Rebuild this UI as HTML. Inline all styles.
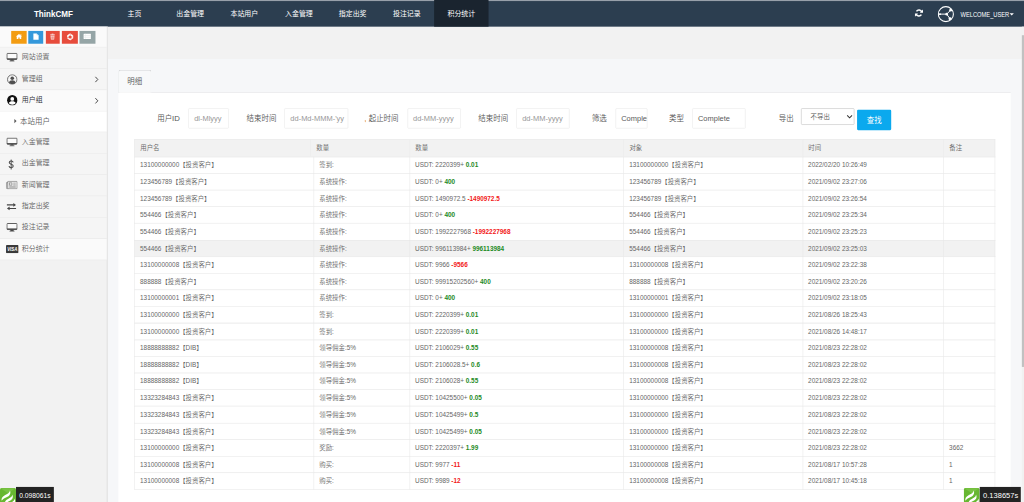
<!DOCTYPE html>
<html lang="zh-CN"><head><meta charset="utf-8"><title>ThinkCMF</title>
<style>
html,body{margin:0;padding:0;width:1024px;height:502px;overflow:hidden;background:#f6f7f9;}
body{font-family:"Liberation Sans","Noto Sans CJK SC",sans-serif;position:relative;}
#stage{position:absolute;left:0;top:0;width:1920px;height:960px;overflow:hidden;transform:scale(0.5333333);transform-origin:0 0;background:#f6f7f9;color:#666;font-size:12px;font-weight:350;}
#stage div,#stage a,#stage span,#stage label,#stage i,#stage b{box-sizing:border-box;}
.band{position:absolute;left:201px;top:50px;width:1719px;height:61px;background:#f2f2f2;}
.ifr{position:absolute;left:201px;top:111px;width:1719px;height:831px;background:#f6f7f9;}
/* header */
.hdr{position:absolute;left:0;top:0;width:1920px;height:50px;background:#2c3e50;}
.topline{position:absolute;left:0;top:0;width:1920px;height:1.9px;background:#98a0aa;}
.brand{position:absolute;left:0;top:0;width:200px;height:50px;line-height:51px;text-align:center;color:#fff;font-size:17px;font-weight:bold;}
.brand span{display:inline-block;transform:scaleX(0.89);}
.nv{position:absolute;top:0;height:50px;line-height:52px;color:#fff;font-size:13px;white-space:nowrap;font-weight:400;}
.navact{position:absolute;top:0;width:101.6px;height:50px;background:#1a242f;}
.wu{position:absolute;left:1800.7px;top:0;height:50px;line-height:56px;color:#fff;font-size:12px;white-space:nowrap;font-weight:400;}
.wu span{display:inline-block;transform:scaleX(0.895);transform-origin:0 50%;}
.caret{position:absolute;left:1893.3px;top:24.6px;width:0;height:0;border-left:4.2px solid transparent;border-right:4.2px solid transparent;border-top:4.6px solid #fff;}
.hic{position:absolute;}
/* sidebar */
.side{position:absolute;left:0;top:50px;width:200px;height:892px;background:#f2f2f2;border-right:2px solid #e1e1e1;box-sizing:content-box !important;}
.shortcuts{position:absolute;left:0;top:0;width:200px;height:39px;background:#fafafa;border-bottom:1px solid #e2e2e2;}
.sbtn{position:absolute;top:7.5px;width:29px;height:24px;}
.sbtn svg{position:absolute;left:50%;margin-left:-14.5px;top:-0.8px;}
.mi{position:absolute;left:0;width:200px;background:#f5f5f5;border-bottom:1px solid #e4e4e4;color:#626262;font-size:13px;}
.mi.open{background:#fafafa;color:#2b2d33;}
.mi.sub{background:#fff;color:#616161;}
.mi.hov{background:#fafafa;}
.mi .ic{position:absolute;left:0;top:0;width:44px;height:39px;}
.mi .ic svg{position:absolute;}
.mi .mt{position:absolute;left:40.8px;top:0;line-height:36px;white-space:nowrap;}
.mi.sub .mt{line-height:36.5px;font-size:14px;}
.subcaret{position:absolute;left:26.6px;top:14.4px;width:0;height:0;border-top:4px solid transparent;border-bottom:4px solid transparent;border-left:4.6px solid #555;}
/* tab & panel */
.tabline{position:absolute;left:222px;top:172.5px;width:1673px;height:1px;background:#dddee1;}
.tab{position:absolute;left:221.6px;top:131px;width:62px;height:42.5px;border:1.3px solid #d3d4d7;border-bottom:none;border-radius:4px 4px 0 0;background:#f8f9fa;color:#555;font-size:14px;line-height:40px;text-align:center;}
.panel{position:absolute;left:222px;top:173.5px;width:1673px;height:780px;background:#fff;}
/* form */
.fl{position:absolute;top:203px;height:38px;line-height:38px;font-size:14px;color:#555;white-space:nowrap;}
.fi{position:absolute;top:203px;height:38px;border:1px solid #e6e6e6;border-radius:2px;background:#fff;overflow:hidden;font-size:14px;color:#979797;line-height:37px;white-space:nowrap;}
.fi span{position:absolute;left:10px;top:0;}
.fi.val{color:#5a5a5a;}
.omark{position:absolute;left:684.2px;top:225px;width:2px;height:4.4px;background:#eab27a;border-radius:1px;}
.sel{position:absolute;left:1502.3px;top:203px;width:100px;height:31px;border:1px solid #bdbdbd;border-radius:2px;background:#fff;font-size:12px;color:#555;line-height:32px;}
.sel span{position:absolute;left:16.6px;top:0;}
.sel svg{position:absolute;left:83.4px;top:9.6px;}
.btn{position:absolute;left:1607.3px;top:206.3px;width:64px;height:38px;background:#0ba9ee;border-radius:2px;color:#fff;font-size:14px;line-height:41.5px;text-align:center;font-weight:400;}
/* table */
.thead{position:absolute;background:#f2f2f2;border:1px solid #e6e6e6;border-right:none;}
.th{position:absolute;top:-1px;bottom:-1px;border-right:1px solid #ebebeb;padding-left:10px;line-height:34px;white-space:nowrap;color:#666;}
.th:last-child{border-right:1px solid #e6e6e6;}
.tr{position:absolute;background:#fff;border:1px solid #e6e6e6;border-right:none;}
.tr.hv{background:#f2f2f2;}
.td{position:absolute;top:-1px;bottom:-1px;border-right:1px solid #e6e6e6;padding-left:9.6px;line-height:33.4px;white-space:nowrap;color:#666;}
.td .sp{display:inline-block;width:0.4px;}
.td b.g{color:#1d8a25;font-weight:bold;}
.td b.r{color:#f21818;font-weight:bold;}
/* scrollbar */
.sbtrack{position:absolute;left:1915.6px;top:50px;width:5px;height:892px;background:#f1f1f1;}
.sbthumb{position:absolute;left:1916.3px;top:66.2px;width:4px;height:621.4px;background:#c1c1c1;}
/* trace */
.trace{position:absolute;height:40px;white-space:nowrap;}
.trace svg{position:absolute;left:0;top:1.7px;}
.trace .tt{position:absolute;left:30px;top:0;height:40px;width:71.3px;background:#232323;color:#fff;font-size:12.6px;line-height:33px;padding-left:6px;font-weight:400;}

</style></head><body>
<div id="stage">
<div class="band"></div>
<div class="ifr"></div>
<div class="hdr"><div class="topline"></div>
<div class="brand"><span>ThinkCMF</span></div>
<a class="nv" style="left:239.0px">主页</a>
<a class="nv" style="left:330.5px">出金管理</a>
<a class="nv" style="left:432.2px">本站用户</a>
<a class="nv" style="left:534.4px">入金管理</a>
<a class="nv" style="left:635.2px">指定出奖</a>
<a class="nv" style="left:736.9px">投注记录</a>
<div class="navact" style="left:814.0px"></div><a class="nv" style="left:839.0px">积分统计</a>
<svg class="hic" style="left:1714.5px;top:17.4px" width="16" height="15" viewBox="0 0 16 15"><g fill="none" stroke="#fff" stroke-width="2.800"><path d="M13.300 5.600A5.500 5.500 0 0 0 3.400 4.400"/><path d="M2.700 9.400A5.500 5.500 0 0 0 12.600 10.600"/></g><path d="M15.600 0.800v6H9.600z" fill="#fff"/><path d="M0.400 14.200V8.200h6z" fill="#fff"/></svg><svg class="hic" style="left:1758px;top:11.200px" width="31" height="31" viewBox="0 0 31 31"><circle cx="15.500" cy="15.500" r="14.100" fill="none" stroke="#fff" stroke-width="2"/><g stroke="#fff" stroke-width="1.800" fill="none"><path d="M2 15.500H17L25.500 7"/><path d="M17 15.500L24 25"/></g><circle cx="17" cy="15.500" r="2.400" fill="#fff"/><circle cx="24.500" cy="8" r="2.600" fill="#fff"/><circle cx="23.300" cy="24" r="2.800" fill="#fff"/><circle cx="4.600" cy="15.500" r="1.800" fill="#fff"/></svg><div class="wu"><span>WELCOME_USER</span></div><div class="caret"></div>
</div>
<div class="side">
<div class="shortcuts"><div class="sbtn" style="left:21.0px;width:29.2px;background:#f39c12"><svg width="29" height="24" viewBox="0 0 29 24"><path d="M14.600 6.600L8.800 11.600h1.600v4.700h3v-3.100h2.400v3.100h3v-4.700h1.600z" fill="#fff"/><rect x="17.400" y="7.300" width="1.500" height="2.800" fill="#fff"/></svg></div><div class="sbtn" style="left:53.0px;width:28.3px;background:#3498db"><svg width="29" height="24" viewBox="0 0 29 24"><path d="M9.600 5.600h6.200l3.600 3.600v8.400H9.600z" fill="#fff"/><path d="M15.800 5.600v3.600h3.600z" fill="#a6d0ef"/></svg></div><div class="sbtn" style="left:85.6px;width:26.8px;background:#e74c3c"><svg width="29" height="24" viewBox="0 0 29 24"><g opacity="0.92"><rect x="10.200" y="7.600" width="8.600" height="1.500" fill="#fff"/><rect x="12.800" y="6.200" width="3.400" height="1.500" fill="#fff"/><path d="M10.900 10h7.200l-.6 7.200h-6z" fill="#fff"/><g stroke="#e74c3c" stroke-width="0.900"><path d="M12.900 11.200v4.800M14.500 11.200v4.800M16.100 11.200v4.800"/></g></g></svg></div><div class="sbtn" style="left:116.2px;width:29.7px;background:#e74c3c"><svg width="29" height="24" viewBox="0 0 29 24"><path d="M14.500 6.400l4.900 3v5.400l-4.900 3-4.900-3V9.400z" fill="#fff" stroke="#fff" stroke-width="1.400" stroke-linejoin="round"/><path d="M14.500 9.200l2.800 1.600v3.200l-2.800 1.600-2.800-1.600v-3.200z" fill="#e74c3c"/><g stroke="#e74c3c" stroke-width="0.900"><path d="M16.800 5l-1.300 3.400M8.600 13.600l3.400-.4M19.600 17.200l-2.400-2.400"/></g></svg></div><div class="sbtn" style="left:148.7px;width:30.2px;background:#95a5a6"><svg width="29" height="24" viewBox="0 0 29 24"><rect x="7.800" y="6.200" width="13.600" height="10" rx="0.600" fill="#fff"/><g stroke="#d9dede" stroke-width="0.8"><path d="M7.800 9.600h13.600M7.800 12.900h13.600"/></g><path d="M11.200 6.200v10" stroke="#e2e6e6" stroke-width="0.700"/></svg></div></div>
<div class="mi" style="top:39.0px;height:40.0px"><span class="ic"><svg style="left:11.5px;top:10.4px" width="21" height="17" viewBox="0 0 21 17"><rect x="1" y="1" width="19" height="11.400" rx="1.400" fill="#fbfbfb" stroke="#4a4a4a" stroke-width="1.700"/><rect x="1" y="10.300" width="19" height="2.100" fill="#4a4a4a"/><path d="M8 12.300h5l.8 2.600H7.200z" fill="#4a4a4a"/><rect x="5.800" y="14.600" width="9.400" height="1.600" rx="0.600" fill="#4a4a4a"/></svg></span><span class="mt">网站设置</span></div>
<div class="mi" style="top:79.0px;height:40.0px"><span class="ic"><svg style="left:12.6px;top:10.2px" width="20" height="20" viewBox="0 0 20 20"><circle cx="10" cy="10" r="8.9" fill="none" stroke="#4f4f4f" stroke-width="1.5"/><circle cx="10" cy="7.7" r="3.3" fill="#4f4f4f"/><path d="M3.8 15.6c.8-3 3-4.2 6.2-4.2s5.4 1.200 6.200 4.200c-1.600 1.900-3.800 2.900-6.200 2.900s-4.600-1-6.200-2.900z" fill="#4f4f4f"/></svg></span><span class="mt">管理组</span><svg style="position:absolute;left:176.600px;top:13.400px" width="9" height="14" viewBox="0 0 9 14"><path d="M1.800 2L6.400 7l-4.600 5" fill="none" stroke="#444" stroke-width="1.800"/></svg></div>
<div class="mi open" style="top:119.0px;height:40.0px"><span class="ic"><svg style="left:12.6px;top:9.2px" width="20" height="20" viewBox="0 0 20 20"><circle cx="10" cy="10" r="9.7" fill="#111"/><circle cx="10" cy="7.5" r="3.5" fill="#fff"/><path d="M3.5 15.2c1-2.500 3.200-3.500 6.500-3.500s5.500 1 6.500 3.500c-1.500 2-3.900 3.100-6.500 3.100s-5-1.100-6.500-3.100z" fill="#fff"/></svg></span><span class="mt">用户组</span><svg style="position:absolute;left:176.600px;top:13.400px" width="9" height="14" viewBox="0 0 9 14"><path d="M1.800 2L6.400 7l-4.600 5" fill="none" stroke="#444" stroke-width="1.800"/></svg></div>
<div class="mi sub" style="top:159.0px;height:38.8px"><i class="subcaret"></i><span class="mt" style="left:37.6px">本站用户</span></div>
<div class="mi" style="top:197.8px;height:40.0px"><span class="ic"><svg style="left:11.5px;top:10.4px" width="21" height="17" viewBox="0 0 21 17"><rect x="1" y="1" width="19" height="11.400" rx="1.400" fill="#fbfbfb" stroke="#4a4a4a" stroke-width="1.700"/><rect x="1" y="10.300" width="19" height="2.100" fill="#4a4a4a"/><path d="M8 12.300h5l.8 2.600H7.200z" fill="#4a4a4a"/><rect x="5.800" y="14.600" width="9.400" height="1.600" rx="0.600" fill="#4a4a4a"/></svg></span><span class="mt">入金管理</span></div>
<div class="mi" style="top:237.8px;height:40.0px"><span class="ic"><svg style="left:14.8px;top:10.2px" width="12" height="21" viewBox="0 0 12 21"><path d="M9.8 6.400C9.400 4.700 8 3.900 6 3.900 3.800 3.900 2.400 5 2.400 6.700c0 4.200 7.400 2.400 7.400 6.700 0 1.800-1.500 3-3.800 3-2.300 0-3.800-1-4.200-2.900" fill="none" stroke="#4a4a4a" stroke-width="2"/><path d="M6 1.200v18.600" stroke="#4a4a4a" stroke-width="1.7"/></svg></span><span class="mt">出金管理</span></div>
<div class="mi" style="top:277.8px;height:40.0px"><span class="ic"><svg style="left:11px;top:11.6px" width="22" height="16" viewBox="0 0 22 16"><rect x="3.400" y="0.900" width="17.700" height="14.200" rx="1.200" fill="#efefef" stroke="#6e6e6e" stroke-width="1.300"/><path d="M3.400 3.400H1v9.800c0 1 .8 1.900 1.800 1.900h1.600" fill="none" stroke="#6e6e6e" stroke-width="1.200"/><rect x="6.400" y="3.900" width="5" height="4.200" fill="none" stroke="#6e6e6e" stroke-width="1.100"/><g stroke="#888" stroke-width="1"><path d="M13.800 4.200h4.800M13.800 6.300h4.800M13.800 8.400h4.800M6.200 10.600h12.400M6.200 12.700h12.400"/></g></svg></span><span class="mt">新闻管理</span></div>
<div class="mi" style="top:317.8px;height:40.0px"><span class="ic"><svg style="left:12.4px;top:12.600px" width="19" height="15" viewBox="0 0 19 15"><path d="M0.800 4.200h13.200" stroke="#444" stroke-width="2"/><path d="M13 0.600l5 3.600-5 3.600z" fill="#444"/><path d="M18.200 10.800H5" stroke="#444" stroke-width="2"/><path d="M6 7.200l-5 3.600 5 3.600z" fill="#444"/></svg></span><span class="mt">指定出奖</span></div>
<div class="mi" style="top:357.8px;height:40.0px"><span class="ic"><svg style="left:11.5px;top:10.4px" width="21" height="17" viewBox="0 0 21 17"><rect x="1" y="1" width="19" height="11.400" rx="1.400" fill="#fbfbfb" stroke="#4a4a4a" stroke-width="1.700"/><rect x="1" y="10.300" width="19" height="2.100" fill="#4a4a4a"/><path d="M8 12.300h5l.8 2.600H7.200z" fill="#4a4a4a"/><rect x="5.800" y="14.600" width="9.400" height="1.600" rx="0.600" fill="#4a4a4a"/></svg></span><span class="mt">投注记录</span></div>
<div class="mi hov" style="top:397.8px;height:40.0px"><span class="ic"><svg style="left:10.600px;top:11.200px" width="24" height="16" viewBox="0 0 24 16"><rect x="0.300" y="0.300" width="23.400" height="15.400" rx="1.600" fill="#3a3a3a"/><text x="12" y="11.600" font-family="Liberation Sans, sans-serif" font-size="9" font-weight="bold" font-style="italic" fill="#fff" text-anchor="middle" textLength="19" lengthAdjust="spacingAndGlyphs">VISA</text></svg></span><span class="mt">积分统计</span></div>
</div>
<div class="tabline"></div><div class="tab"><span>明细</span></div>
<div class="panel"></div>
<label class="fl" style="left:294.7px">用户<span style="font-size:14.6px;letter-spacing:-0.1px">ID</span></label><div class="fi" style="left:353.0px;width:76.0px"><span>dl-Mlyyy</span></div>
<label class="fl" style="left:462.2px">结束时间</label><div class="fi" style="left:533.4px;width:120.0px"><span>dd-Md-MMM-'yy</span></div>
<i class="omark"></i><label class="fl" style="left:691.3px">起止时间</label><div class="fi" style="left:763.5px;width:100.0px"><span>dd-MM-yyyy</span></div>
<label class="fl" style="left:896.9px">结束时间</label><div class="fi" style="left:968.1px;width:100.0px"><span>dd-MM-yyyy</span></div>
<label class="fl" style="left:1109.8px">筛选</label><div class="fi val" style="left:1153.8px;width:60.0px"><span>Complete</span></div>
<label class="fl" style="left:1254.5px">类型</label><div class="fi val" style="left:1297.7px;width:100.0px"><span>Complete</span></div>
<label class="fl" style="left:1460.4px">导出</label><div class="sel"><span>不导出</span><svg width="12" height="10" viewBox="0 0 12 10"><path d="M1.400 2.400L6 7l4.600-4.600" fill="none" stroke="#333" stroke-width="1.900"/></svg></div>
<div class="btn"><span>查找</span></div>
<div class="thead" style="left:252.0px;top:261.30px;width:1614.0px;height:33.30px"><div class="th" style="left:0.0px;width:330.0px"><span>用户名</span></div><div class="th" style="left:330.0px;width:185.7px"><span>数量</span></div><div class="th" style="left:515.7px;width:401.5px"><span>数量</span></div><div class="th" style="left:917.2px;width:335.4px"><span>对象</span></div><div class="th" style="left:1252.6px;width:264.4px"><span>时间</span></div><div class="th" style="left:1517.0px;width:96.0px"><span>备注</span></div></div>
<div class="tr" style="left:252.0px;top:293.60px;width:1614.0px;height:32.19px"><div class="td" style="left:0.0px;width:335.7px"><span>13100000000【投资客户】</span></div><div class="td" style="left:335.7px;width:180.0px"><span><i class="sp"></i>签到:</span></div><div class="td" style="left:515.7px;width:401.5px"><span>USDT: 2220399+ <b class="g">0.01</b></span></div><div class="td" style="left:917.2px;width:335.4px"><span>13100000000【投资客户】</span></div><div class="td" style="left:1252.6px;width:264.4px"><span>2022/02/20 10:26:49</span></div><div class="td" style="left:1517.0px;width:96.0px"><span></span></div></div>
<div class="tr" style="left:252.0px;top:324.79px;width:1614.0px;height:32.19px"><div class="td" style="left:0.0px;width:335.7px"><span>123456789【投资客户】</span></div><div class="td" style="left:335.7px;width:180.0px"><span><i class="sp"></i>系统操作:</span></div><div class="td" style="left:515.7px;width:401.5px"><span>USDT: 0+ <b class="g">400</b></span></div><div class="td" style="left:917.2px;width:335.4px"><span>123456789【投资客户】</span></div><div class="td" style="left:1252.6px;width:264.4px"><span>2021/09/02 23:27:06</span></div><div class="td" style="left:1517.0px;width:96.0px"><span></span></div></div>
<div class="tr" style="left:252.0px;top:355.98px;width:1614.0px;height:32.19px"><div class="td" style="left:0.0px;width:335.7px"><span>123456789【投资客户】</span></div><div class="td" style="left:335.7px;width:180.0px"><span><i class="sp"></i>系统操作:</span></div><div class="td" style="left:515.7px;width:401.5px"><span>USDT: 1490972.5 <b class="r">-1490972.5</b></span></div><div class="td" style="left:917.2px;width:335.4px"><span>123456789【投资客户】</span></div><div class="td" style="left:1252.6px;width:264.4px"><span>2021/09/02 23:26:54</span></div><div class="td" style="left:1517.0px;width:96.0px"><span></span></div></div>
<div class="tr" style="left:252.0px;top:387.17px;width:1614.0px;height:32.19px"><div class="td" style="left:0.0px;width:335.7px"><span>554466【投资客户】</span></div><div class="td" style="left:335.7px;width:180.0px"><span><i class="sp"></i>系统操作:</span></div><div class="td" style="left:515.7px;width:401.5px"><span>USDT: 0+ <b class="g">400</b></span></div><div class="td" style="left:917.2px;width:335.4px"><span>554466【投资客户】</span></div><div class="td" style="left:1252.6px;width:264.4px"><span>2021/09/02 23:25:34</span></div><div class="td" style="left:1517.0px;width:96.0px"><span></span></div></div>
<div class="tr" style="left:252.0px;top:418.36px;width:1614.0px;height:32.19px"><div class="td" style="left:0.0px;width:335.7px"><span>554466【投资客户】</span></div><div class="td" style="left:335.7px;width:180.0px"><span><i class="sp"></i>系统操作:</span></div><div class="td" style="left:515.7px;width:401.5px"><span>USDT: 1992227968 <b class="r">-1992227968</b></span></div><div class="td" style="left:917.2px;width:335.4px"><span>554466【投资客户】</span></div><div class="td" style="left:1252.6px;width:264.4px"><span>2021/09/02 23:25:23</span></div><div class="td" style="left:1517.0px;width:96.0px"><span></span></div></div>
<div class="tr hv" style="left:252.0px;top:449.55px;width:1614.0px;height:32.19px"><div class="td" style="left:0.0px;width:335.7px"><span>554466【投资客户】</span></div><div class="td" style="left:335.7px;width:180.0px"><span><i class="sp"></i>系统操作:</span></div><div class="td" style="left:515.7px;width:401.5px"><span>USDT: 996113984+ <b class="g">996113984</b></span></div><div class="td" style="left:917.2px;width:335.4px"><span>554466【投资客户】</span></div><div class="td" style="left:1252.6px;width:264.4px"><span>2021/09/02 23:25:03</span></div><div class="td" style="left:1517.0px;width:96.0px"><span></span></div></div>
<div class="tr" style="left:252.0px;top:480.74px;width:1614.0px;height:32.19px"><div class="td" style="left:0.0px;width:335.7px"><span>13100000008【投资客户】</span></div><div class="td" style="left:335.7px;width:180.0px"><span><i class="sp"></i>系统操作:</span></div><div class="td" style="left:515.7px;width:401.5px"><span>USDT: 9966 <b class="r">-9566</b></span></div><div class="td" style="left:917.2px;width:335.4px"><span>13100000008【投资客户】</span></div><div class="td" style="left:1252.6px;width:264.4px"><span>2021/09/02 23:22:38</span></div><div class="td" style="left:1517.0px;width:96.0px"><span></span></div></div>
<div class="tr" style="left:252.0px;top:511.93px;width:1614.0px;height:32.19px"><div class="td" style="left:0.0px;width:335.7px"><span>888888【投资客户】</span></div><div class="td" style="left:335.7px;width:180.0px"><span><i class="sp"></i>系统操作:</span></div><div class="td" style="left:515.7px;width:401.5px"><span>USDT: 99915202560+ <b class="g">400</b></span></div><div class="td" style="left:917.2px;width:335.4px"><span>888888【投资客户】</span></div><div class="td" style="left:1252.6px;width:264.4px"><span>2021/09/02 23:20:26</span></div><div class="td" style="left:1517.0px;width:96.0px"><span></span></div></div>
<div class="tr" style="left:252.0px;top:543.12px;width:1614.0px;height:32.19px"><div class="td" style="left:0.0px;width:335.7px"><span>13100000001【投资客户】</span></div><div class="td" style="left:335.7px;width:180.0px"><span><i class="sp"></i>系统操作:</span></div><div class="td" style="left:515.7px;width:401.5px"><span>USDT: 0+ <b class="g">400</b></span></div><div class="td" style="left:917.2px;width:335.4px"><span>13100000001【投资客户】</span></div><div class="td" style="left:1252.6px;width:264.4px"><span>2021/09/02 23:18:05</span></div><div class="td" style="left:1517.0px;width:96.0px"><span></span></div></div>
<div class="tr" style="left:252.0px;top:574.31px;width:1614.0px;height:32.19px"><div class="td" style="left:0.0px;width:335.7px"><span>13100000000【投资客户】</span></div><div class="td" style="left:335.7px;width:180.0px"><span><i class="sp"></i>签到:</span></div><div class="td" style="left:515.7px;width:401.5px"><span>USDT: 2220399+ <b class="g">0.01</b></span></div><div class="td" style="left:917.2px;width:335.4px"><span>13100000000【投资客户】</span></div><div class="td" style="left:1252.6px;width:264.4px"><span>2021/08/26 18:25:43</span></div><div class="td" style="left:1517.0px;width:96.0px"><span></span></div></div>
<div class="tr" style="left:252.0px;top:605.50px;width:1614.0px;height:32.19px"><div class="td" style="left:0.0px;width:335.7px"><span>13100000000【投资客户】</span></div><div class="td" style="left:335.7px;width:180.0px"><span><i class="sp"></i>签到:</span></div><div class="td" style="left:515.7px;width:401.5px"><span>USDT: 2220399+ <b class="g">0.01</b></span></div><div class="td" style="left:917.2px;width:335.4px"><span>13100000000【投资客户】</span></div><div class="td" style="left:1252.6px;width:264.4px"><span>2021/08/26 14:48:17</span></div><div class="td" style="left:1517.0px;width:96.0px"><span></span></div></div>
<div class="tr" style="left:252.0px;top:636.69px;width:1614.0px;height:32.19px"><div class="td" style="left:0.0px;width:335.7px"><span>18888888882【DIB】</span></div><div class="td" style="left:335.7px;width:180.0px"><span><i class="sp"></i>领导佣金:5%</span></div><div class="td" style="left:515.7px;width:401.5px"><span>USDT: 2106029+ <b class="g">0.55</b></span></div><div class="td" style="left:917.2px;width:335.4px"><span>13100000008【投资客户】</span></div><div class="td" style="left:1252.6px;width:264.4px"><span>2021/08/23 22:28:02</span></div><div class="td" style="left:1517.0px;width:96.0px"><span></span></div></div>
<div class="tr" style="left:252.0px;top:667.88px;width:1614.0px;height:32.19px"><div class="td" style="left:0.0px;width:335.7px"><span>18888888882【DIB】</span></div><div class="td" style="left:335.7px;width:180.0px"><span><i class="sp"></i>领导佣金:5%</span></div><div class="td" style="left:515.7px;width:401.5px"><span>USDT: 2106028.5+ <b class="g">0.6</b></span></div><div class="td" style="left:917.2px;width:335.4px"><span>13100000008【投资客户】</span></div><div class="td" style="left:1252.6px;width:264.4px"><span>2021/08/23 22:28:02</span></div><div class="td" style="left:1517.0px;width:96.0px"><span></span></div></div>
<div class="tr" style="left:252.0px;top:699.07px;width:1614.0px;height:32.19px"><div class="td" style="left:0.0px;width:335.7px"><span>18888888882【DIB】</span></div><div class="td" style="left:335.7px;width:180.0px"><span><i class="sp"></i>领导佣金:5%</span></div><div class="td" style="left:515.7px;width:401.5px"><span>USDT: 2106028+ <b class="g">0.55</b></span></div><div class="td" style="left:917.2px;width:335.4px"><span>13100000008【投资客户】</span></div><div class="td" style="left:1252.6px;width:264.4px"><span>2021/08/23 22:28:02</span></div><div class="td" style="left:1517.0px;width:96.0px"><span></span></div></div>
<div class="tr" style="left:252.0px;top:730.26px;width:1614.0px;height:32.19px"><div class="td" style="left:0.0px;width:335.7px"><span>13323284843【投资客户】</span></div><div class="td" style="left:335.7px;width:180.0px"><span><i class="sp"></i>领导佣金:5%</span></div><div class="td" style="left:515.7px;width:401.5px"><span>USDT: 10425500+ <b class="g">0.05</b></span></div><div class="td" style="left:917.2px;width:335.4px"><span>13100000000【投资客户】</span></div><div class="td" style="left:1252.6px;width:264.4px"><span>2021/08/23 22:28:02</span></div><div class="td" style="left:1517.0px;width:96.0px"><span></span></div></div>
<div class="tr" style="left:252.0px;top:761.45px;width:1614.0px;height:32.19px"><div class="td" style="left:0.0px;width:335.7px"><span>13323284843【投资客户】</span></div><div class="td" style="left:335.7px;width:180.0px"><span><i class="sp"></i>领导佣金:5%</span></div><div class="td" style="left:515.7px;width:401.5px"><span>USDT: 10425499+ <b class="g">0.5</b></span></div><div class="td" style="left:917.2px;width:335.4px"><span>13100000000【投资客户】</span></div><div class="td" style="left:1252.6px;width:264.4px"><span>2021/08/23 22:28:02</span></div><div class="td" style="left:1517.0px;width:96.0px"><span></span></div></div>
<div class="tr" style="left:252.0px;top:792.64px;width:1614.0px;height:32.19px"><div class="td" style="left:0.0px;width:335.7px"><span>13323284843【投资客户】</span></div><div class="td" style="left:335.7px;width:180.0px"><span><i class="sp"></i>领导佣金:5%</span></div><div class="td" style="left:515.7px;width:401.5px"><span>USDT: 10425499+ <b class="g">0.05</b></span></div><div class="td" style="left:917.2px;width:335.4px"><span>13100000000【投资客户】</span></div><div class="td" style="left:1252.6px;width:264.4px"><span>2021/08/23 22:28:02</span></div><div class="td" style="left:1517.0px;width:96.0px"><span></span></div></div>
<div class="tr" style="left:252.0px;top:823.83px;width:1614.0px;height:32.19px"><div class="td" style="left:0.0px;width:335.7px"><span>13100000000【投资客户】</span></div><div class="td" style="left:335.7px;width:180.0px"><span><i class="sp"></i>奖励:</span></div><div class="td" style="left:515.7px;width:401.5px"><span>USDT: 2220397+ <b class="g">1.99</b></span></div><div class="td" style="left:917.2px;width:335.4px"><span>13100000000【投资客户】</span></div><div class="td" style="left:1252.6px;width:264.4px"><span>2021/08/23 22:28:02</span></div><div class="td" style="left:1517.0px;width:96.0px"><span>3662</span></div></div>
<div class="tr" style="left:252.0px;top:855.02px;width:1614.0px;height:32.19px"><div class="td" style="left:0.0px;width:335.7px"><span>13100000008【投资客户】</span></div><div class="td" style="left:335.7px;width:180.0px"><span><i class="sp"></i>购买:</span></div><div class="td" style="left:515.7px;width:401.5px"><span>USDT: 9977 <b class="r">-11</b></span></div><div class="td" style="left:917.2px;width:335.4px"><span>13100000008【投资客户】</span></div><div class="td" style="left:1252.6px;width:264.4px"><span>2021/08/17 10:57:28</span></div><div class="td" style="left:1517.0px;width:96.0px"><span>1</span></div></div>
<div class="tr" style="left:252.0px;top:886.21px;width:1614.0px;height:32.19px"><div class="td" style="left:0.0px;width:335.7px"><span>13100000008【投资客户】</span></div><div class="td" style="left:335.7px;width:180.0px"><span><i class="sp"></i>购买:</span></div><div class="td" style="left:515.7px;width:401.5px"><span>USDT: 9989 <b class="r">-12</b></span></div><div class="td" style="left:917.2px;width:335.4px"><span>13100000008【投资客户】</span></div><div class="td" style="left:1252.6px;width:264.4px"><span>2021/08/17 10:45:18</span></div><div class="td" style="left:1517.0px;width:96.0px"><span>1</span></div></div>
<div class="sbtrack"></div><div class="sbthumb"></div>
<div class="trace" style="left:0;top:913px"><svg width="30" height="36" viewBox="0 0 30 36"><rect x="0" y="0" width="30" height="36" rx="3" fill="#67b731"/><path d="M1 0.500h28L15 10z" fill="#7dc549" opacity="0.800"/><path d="M18.500 4C19 8.500 13.500 11 9 13.500 4 16.300 2 19.500 3.200 24 4.800 20.800 8 19 12.200 17.200 17.800 14.800 21.200 10.500 18.500 4z" fill="#fff"/><path d="M23 12C23.500 16.300 18.500 18.800 14.300 21 10 23.300 8.300 26.500 9.400 31 11 27.800 13.500 26.300 17.600 24.600 22.800 22.400 25.800 18 23 12z" fill="#fff"/><path d="M27.300 19.500C27.800 23.300 24 25.600 20.800 27.400 17.600 29.200 16.400 32 16.800 36L19.500 36C20.500 33.500 22 32.300 24.500 31.200 28.300 29.500 29.500 24.500 27.300 19.500z" fill="#fff"/></svg><div class="tt">0.098061s</div></div>
<div class="trace" style="left:1807.3px;top:913.2px"><svg width="30" height="36" viewBox="0 0 30 36"><rect x="0" y="0" width="30" height="36" rx="3" fill="#67b731"/><path d="M1 0.500h28L15 10z" fill="#7dc549" opacity="0.800"/><path d="M18.500 4C19 8.500 13.500 11 9 13.500 4 16.300 2 19.500 3.200 24 4.800 20.800 8 19 12.200 17.200 17.800 14.800 21.200 10.500 18.500 4z" fill="#fff"/><path d="M23 12C23.500 16.300 18.500 18.800 14.300 21 10 23.300 8.300 26.500 9.400 31 11 27.800 13.500 26.300 17.600 24.600 22.800 22.400 25.800 18 23 12z" fill="#fff"/><path d="M27.300 19.500C27.800 23.300 24 25.600 20.800 27.400 17.600 29.200 16.400 32 16.800 36L19.500 36C20.500 33.500 22 32.300 24.500 31.200 28.300 29.500 29.500 24.500 27.300 19.500z" fill="#fff"/></svg><div class="tt" style="width:77px;font-size:14.1px">0.138657s</div></div>
</div>
</body></html>
